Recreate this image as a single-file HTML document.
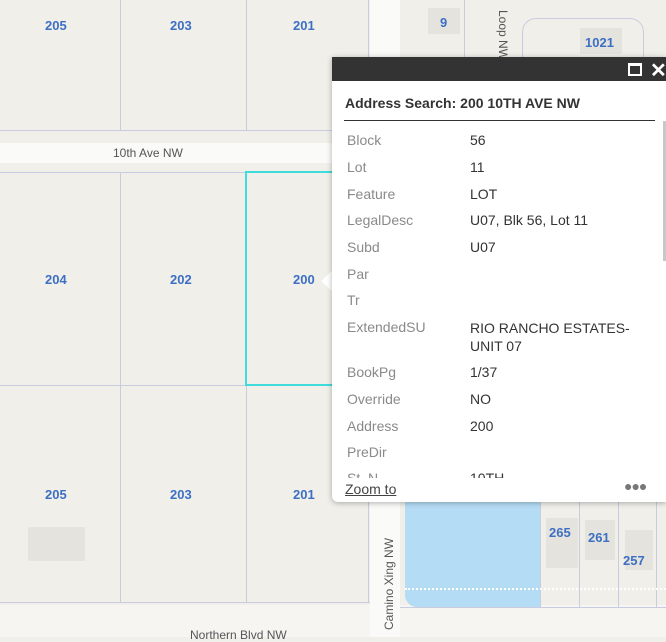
<!DOCTYPE html>
<html><head><meta charset="utf-8"><style>
body{margin:0;width:666px;height:637px;overflow:hidden;background:#f0efea;font-family:"Liberation Sans",sans-serif;position:relative}
.a{position:absolute}
.n{position:absolute;color:#3d6fc4;font-weight:bold;font-size:13px}
.vl{position:absolute;width:1px;background:#c9cce0}
.hl{position:absolute;height:1px;background:#c9cce0}
.pop{position:absolute;left:332px;top:57px;width:334px;height:445px;background:#fff;border-radius:0 0 0 6px;box-shadow:0 1px 6px rgba(0,0,0,.3);overflow:hidden}
.row{position:absolute;left:15px;font-size:14px;color:#333}
.row span{position:absolute;left:0;color:#8a8a8a;white-space:nowrap}
.row b{font-weight:normal;position:absolute;left:123px;white-space:nowrap}
</style></head><body>
<!-- roads -->
<div class="a" style="left:0;top:143px;width:385px;height:20px;background:#fafaf8"></div>
<div class="a" style="left:0;top:605px;width:666px;height:32px;background:#f6f5f1"></div>
<div class="a" style="left:370px;top:0;width:30px;height:637px;background:#fafaf8"></div>
<div class="vl" style="left:120px;top:0;height:130px"></div>
<div class="vl" style="left:246px;top:0;height:130px"></div>
<div class="hl" style="left:0;top:130px;width:370px"></div>
<div class="hl" style="left:0;top:172px;width:370px"></div>
<div class="vl" style="left:120px;top:172px;height:430px"></div>
<div class="vl" style="left:246px;top:385px;height:217px"></div>
<div class="hl" style="left:0;top:385px;width:370px"></div>
<div class="hl" style="left:0;top:602px;width:370px"></div>
<div class="vl" style="left:368px;top:0;height:602px"></div>
<div class="a" style="left:245px;top:171px;width:100px;height:211px;border:2px solid #3fdcdc;border-right:none"></div>
<div class="n" style="left:45px;top:18px">205</div>
<div class="n" style="left:170px;top:18px">203</div>
<div class="n" style="left:293px;top:18px">201</div>
<div class="n" style="left:45px;top:272px">204</div>
<div class="n" style="left:170px;top:272px">202</div>
<div class="n" style="left:293px;top:272px">200</div>
<div class="n" style="left:45px;top:487px">205</div>
<div class="n" style="left:170px;top:487px">203</div>
<div class="n" style="left:293px;top:487px">201</div>
<div class="a" style="left:28px;top:527px;width:57px;height:34px;background:#e4e3dd;border-radius:2px"></div>
<div class="a" style="left:113px;top:146px;font-size:12px;color:#555">10th Ave NW</div>
<div class="a" style="left:190px;top:628px;font-size:12px;color:#555">Northern Blvd NW</div>
<div class="a" style="left:340px;top:580px;font-size:12px;color:#555;transform:rotate(-90deg);transform-origin:left top;left:382px;top:630px">Camino Xing NW</div>
<div class="a" style="left:496px;top:10px;font-size:12px;color:#555;transform:rotate(90deg);transform-origin:left top;left:510px">Loop NW</div>
<!-- top right -->
<div class="a" style="left:404px;top:0;width:60px;height:57px;border-right:1px solid #c9cce0"></div>
<div class="a" style="left:428px;top:8px;width:32px;height:26px;background:#e4e3dd"></div>
<div class="n" style="left:440px;top:15px">9</div>
<div class="a" style="left:522px;top:18px;width:120px;height:50px;border:1px solid #c9cce0;border-radius:14px"></div>
<div class="a" style="left:580px;top:28px;width:42px;height:26px;background:#e4e3dd"></div>
<div class="n" style="left:585px;top:35px">1021</div>
<!-- bottom right -->
<div class="a" style="left:405px;top:502px;width:135px;height:105px;background:#b5dcf5;border-radius:0 0 0 12px"></div>
<div class="hl" style="left:400px;top:607px;width:266px"></div>
<div class="vl" style="left:540px;top:502px;height:105px"></div>
<div class="vl" style="left:579px;top:502px;height:105px"></div>
<div class="vl" style="left:618px;top:502px;height:105px"></div>
<div class="vl" style="left:656px;top:502px;height:105px"></div>
<div class="a" style="left:546px;top:518px;width:32px;height:50px;background:#e4e3dd"></div>
<div class="a" style="left:585px;top:520px;width:30px;height:40px;background:#e4e3dd"></div>
<div class="a" style="left:625px;top:530px;width:28px;height:40px;background:#e4e3dd"></div>
<div class="n" style="left:549px;top:525px">265</div>
<div class="n" style="left:588px;top:530px">261</div>
<div class="n" style="left:623px;top:553px">257</div>
<div class="a" style="left:405px;top:588px;width:261px;height:2px;border-top:2px dotted #fff"></div>
<!-- pointer -->
<div class="a" style="left:321px;top:270px;width:0;height:0;border-top:11px solid transparent;border-bottom:11px solid transparent;border-right:12px solid #fff"></div>
<div class="pop">
<div class="a" style="left:0;top:0;width:334px;height:24px;background:#333"></div>
<div class="a" style="left:296px;top:6px;width:10px;height:8px;border:2px solid #fff;border-top-width:3px"></div>
<div class="a" style="left:318px;top:1px;color:#fff;font-size:20px;font-weight:bold">✕</div>
<div class="a" style="left:13px;top:38px;font-size:14px;font-weight:bold;color:#333">Address Search: 200 10TH AVE NW</div>
<div class="a" style="left:12px;top:63px;width:311px;height:1px;background:#333"></div>
<div class="a" style="left:331px;top:64px;width:3px;height:140px;background:#c8c8c8"></div>
<div class="a" style="left:0;top:74px;width:330px;height:347px;overflow:hidden">
<div class="row" style="top:1px"><span>Block</span><b>56</b></div>
<div class="row" style="top:28px"><span>Lot</span><b>11</b></div>
<div class="row" style="top:55px"><span>Feature</span><b>LOT</b></div>
<div class="row" style="top:81px"><span>LegalDesc</span><b>U07, Blk 56, Lot 11</b></div>
<div class="row" style="top:108px"><span>Subd</span><b>U07</b></div>
<div class="row" style="top:135px"><span>Par</span></div>
<div class="row" style="top:161px"><span>Tr</span></div>
<div class="row" style="top:188px"><span>ExtendedSU</span><b style="line-height:18px">RIO RANCHO ESTATES-<br>UNIT 07</b></div>
<div class="row" style="top:233px"><span>BookPg</span><b>1/37</b></div>
<div class="row" style="top:260px"><span>Override</span><b>NO</b></div>
<div class="row" style="top:287px"><span>Address</span><b>200</b></div>
<div class="row" style="top:313px"><span>PreDir</span></div>
<div class="row" style="top:339px"><span>St_N</span><b>10TH</b></div>
</div>
<div class="a" style="left:13px;top:424px;font-size:14px;color:#444;text-decoration:underline">Zoom to</div>
<div class="a" style="left:292px;top:421px;font-size:14px;color:#777;letter-spacing:-1px">●●●</div>
</div>
</body></html>
